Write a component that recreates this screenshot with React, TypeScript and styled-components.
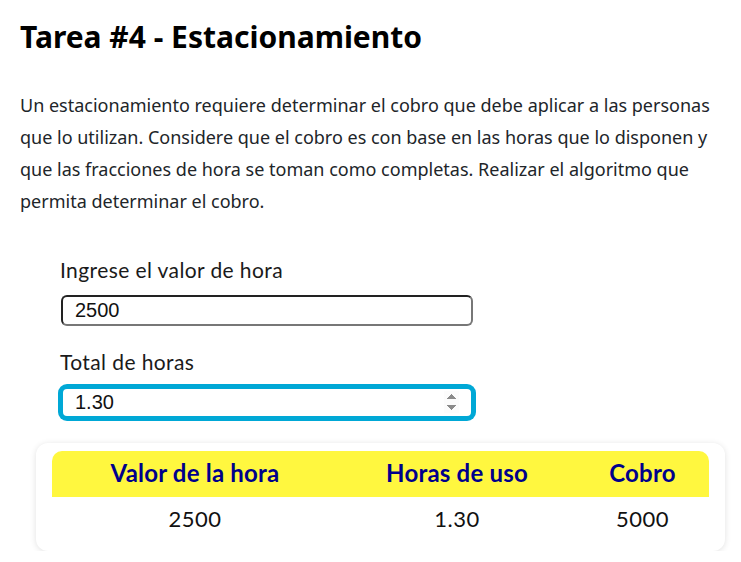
import React from 'react';
import styled, { createGlobalStyle } from 'styled-components';

const GlobalStyle = createGlobalStyle`
  body {
    margin: 0;
    background: #ffffff;
    font-family: 'Noto Sans', 'Open Sans', sans-serif;
    color: #212529;
  }
`;

const Page = styled.main`
  padding: 15px 20px 0 20px;
`;

const Title = styled.h1`
  margin: 0;
  font-family: 'Noto Sans', sans-serif;
  font-size: 30px;
  font-weight: 700;
  color: #000;
  line-height: 44px;
`;

const Description = styled.p`
  margin: 30px 0 0 0;
  font-size: 18px;
  line-height: 32px;
  color: #212529;
`;

const Form = styled.form`
  display: flex;
  flex-direction: column;
  align-items: flex-start;
  padding: 39px 0 0 40px;
`;

const Label = styled.label`
  font-family: 'Lato', sans-serif;
  font-size: 21px;
  letter-spacing: 0.4px;
  color: #1a1a1a;
  line-height: 28px;
  margin-bottom: 11px;
`;

const Input = styled.input<{ $active?: boolean }>`
  box-sizing: border-box;
  width: 412px;
  height: 31px;
  padding: 0 12px;
  margin: 0 0 22px 1px;
  font-family: 'Liberation Sans', Arial, sans-serif;
  font-size: 20px;
  color: #111;
  border-radius: 6px;
  border: 2px solid ${p => (p.$active ? '#00a8d6' : '#222')};
  border-right-color: ${p => (p.$active ? '#00a8d6' : '#777')};
  border-bottom-color: ${p => (p.$active ? '#00a8d6' : '#777')};
  box-shadow: ${p => (p.$active ? '0 0 0 3px #00a8d6' : 'none')};
  outline: none;

  &:focus {
    outline: none;
  }
`;

const Card = styled.section`
  width: 689px;
  box-sizing: border-box;
  margin: 3px 0 0 16px;
  padding: 8px 16px 11px 16px;
  background: #fff;
  border-radius: 12px;
  box-shadow: 0 1px 6px rgba(0, 0, 0, 0.12);
`;

const Row = styled.div<{ $head?: boolean }>`
  display: grid;
  grid-template-columns: 286px 238px 1fr;
  align-items: center;
  box-sizing: border-box;
  height: ${p => (p.$head ? '46px' : '43px')};
  padding-bottom: ${p => (p.$head ? '4px' : '1px')};
  background: ${p => (p.$head ? '#fff73f' : 'transparent')};
  border-radius: ${p => (p.$head ? '10px 10px 0 0' : '0')};
`;

const Cell = styled.div<{ $head?: boolean }>`
  text-align: center;
  font-family: 'Lato', sans-serif;
  font-size: ${p => (p.$head ? '24px' : '22px')};
  letter-spacing: ${p => (p.$head ? '0.2px' : '0.5px')};
  font-weight: ${p => (p.$head ? 700 : 400)};
  color: ${p => (p.$head ? '#00008b' : '#111')};
`;

const rows = [{ valor: '2500', horas: '1.30', cobro: '5000' }];

export default function App() {
  return (
    <>
      <GlobalStyle />
      <Page>
        <Title>Tarea #4 - Estacionamiento</Title>
        <Description>
          Un estacionamiento requiere determinar el cobro que debe aplicar a las personas que lo utilizan.
          Considere que el cobro es con base en las horas que lo disponen y que las fracciones de hora se toman
          como completas. Realizar el algoritmo que permita determinar el cobro.
        </Description>
        <Form onSubmit={e => e.preventDefault()}>
          <Label htmlFor="valor">Ingrese el valor de hora</Label>
          <Input id="valor" type="text" defaultValue="2500" />
          <Label htmlFor="horas">Total de horas</Label>
          <Input id="horas" type="number" step="0.01" defaultValue="1.30" $active autoFocus />
        </Form>
        <Card>
          <Row $head>
            <Cell $head>Valor de la hora</Cell>
            <Cell $head>Horas de uso</Cell>
            <Cell $head>Cobro</Cell>
          </Row>
          {rows.map((r, i) => (
            <Row key={i}>
              <Cell>{r.valor}</Cell>
              <Cell>{r.horas}</Cell>
              <Cell>{r.cobro}</Cell>
            </Row>
          ))}
        </Card>
      </Page>
    </>
  );
}
